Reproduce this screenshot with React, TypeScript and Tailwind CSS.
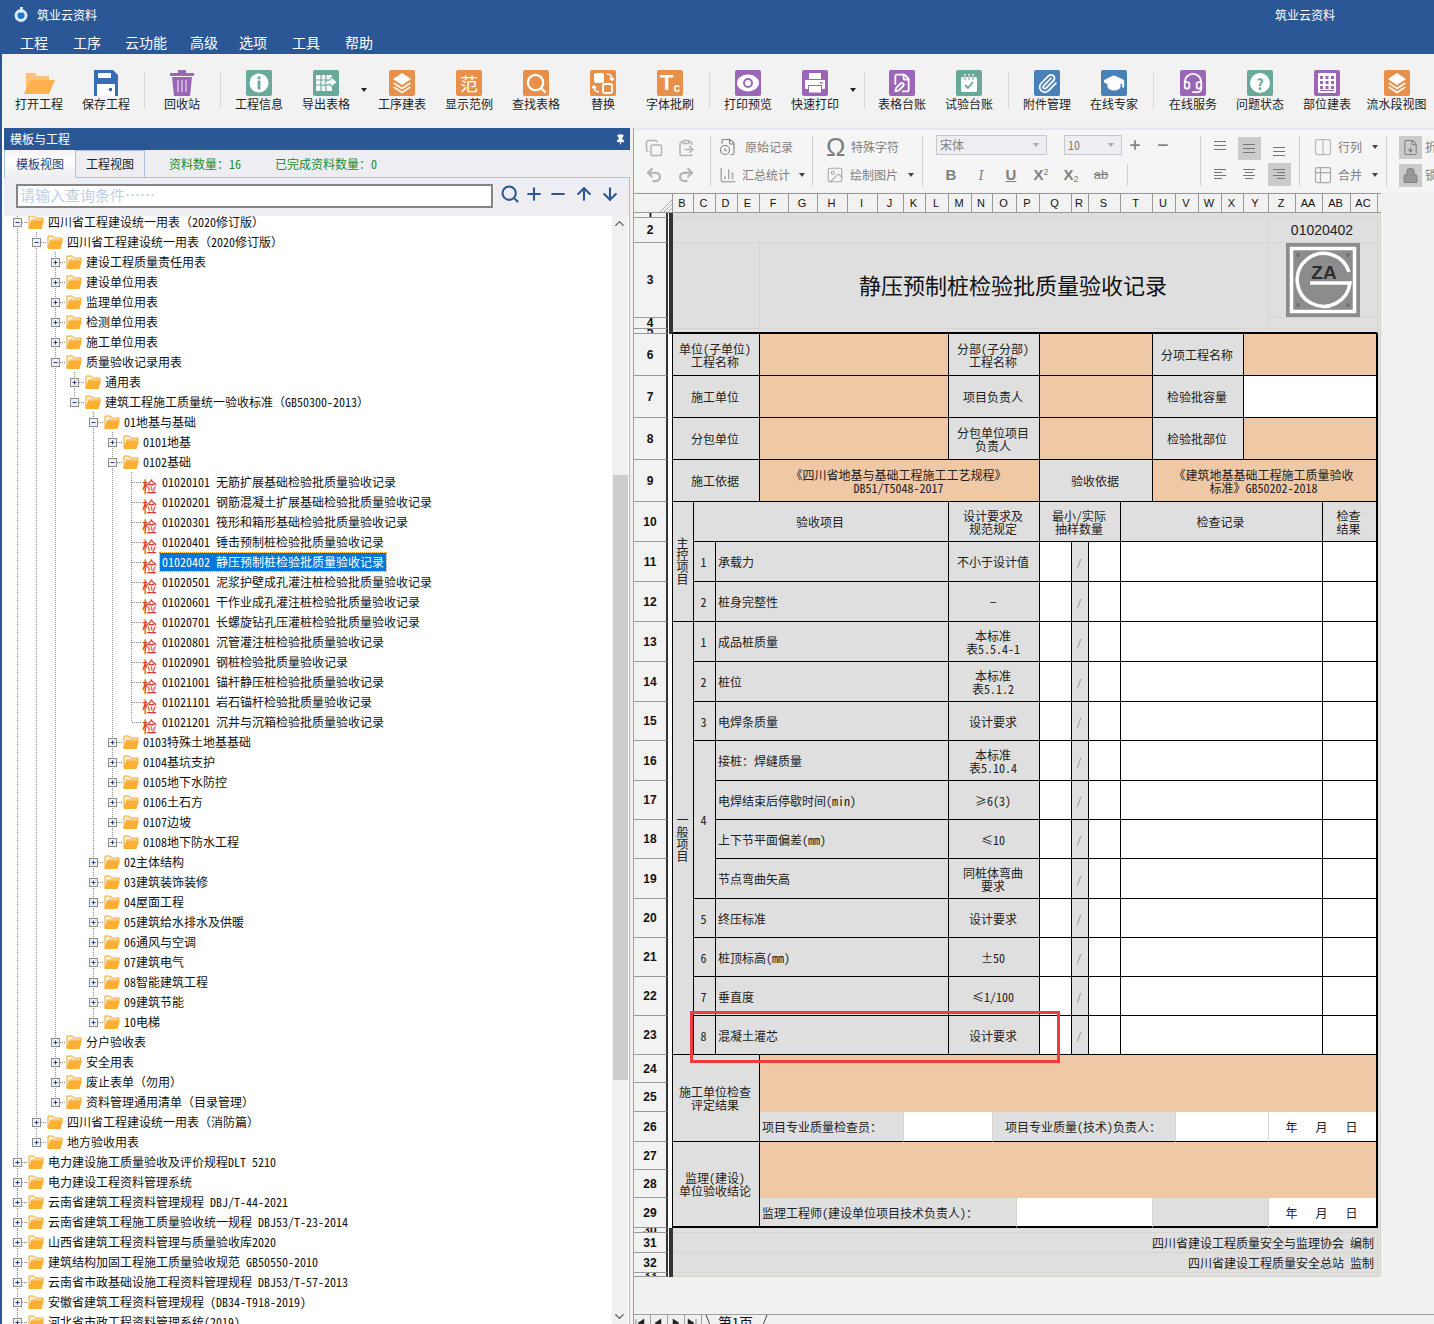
import type { ReactNode } from "react";
import {
  ArrowDown,
  ArrowUp,
  ChartColumn,
  ChevronDown,
  ChevronUp,
  ClipboardPaste,
  Columns2,
  Copy,
  FileClock,
  FileDown,
  FilePen,
  GraduationCap,
  Headset,
  Image,
  Lock,
  Minus,
  Paperclip,
  Pin,
  Plus,
  Redo2,
  Search,
  Table2,
  Undo2,
} from "lucide-react";

// ---------- Toolbar icons ----------
const Tile = ({ className, children }: { className: string; children: ReactNode }) => (
  <div className={`flex h-[26px] w-[26px] items-center justify-center rounded-[2px] text-white ${className}`}>
    {children}
  </div>
);

const LayersGlyph = () => (
  <svg width="20" height="22" viewBox="0 0 20 22" fill="#fff">
    <path d="M10 1 19 7 10 13 1 7z" />
    <path d="M2.5 10.5 10 15.5 17.5 10.5 19 11.5 10 17.5 1 11.5z" />
    <path d="M2.5 14.5 10 19.5 17.5 14.5 19 15.5 10 21.5 1 15.5z" />
  </svg>
);

const OpenFolder = () => (
  <svg width="32" height="24" viewBox="0 0 32 24">
    <path d="M3 2h9l2 3h12v4H7L3 20z" fill="#fcc27a" />
    <path d="M7 9h25l-6 14H1z" fill="#fdb14f" />
  </svg>
);

const SaveIcon = () => (
  <svg width="24" height="26" viewBox="0 0 24 26">
    <path d="M0 0h19l5 5v21H0z" fill="#3a6db4" />
    <rect x="4" y="3" width="13" height="5" fill="#fff" />
    <rect x="3" y="14" width="18" height="12" fill="#fff" />
    <rect x="15" y="18" width="3" height="3" fill="#3a6db4" />
  </svg>
);

const TrashIcon = () => (
  <svg width="24" height="26" viewBox="0 0 24 26">
    <path d="M8 3V0h8v3h8v3H0V3z" fill="#9a66b5" />
    <path d="M2 7h20l-2 19H4z" fill="#9a66b5" />
    <path d="M8 10v12M12 10v12M16 10v12" stroke="#d8c4e4" strokeWidth="1.5" />
  </svg>
);

const InfoGlyph = () => (
  <svg width="20" height="20" viewBox="0 0 20 20">
    <circle cx="10" cy="10" r="9.5" fill="#fff" />
    <rect x="8.6" y="3.5" width="2.8" height="2.8" fill="#6aa99a" />
    <rect x="8.6" y="7.5" width="2.8" height="9" fill="#6aa99a" />
  </svg>
);

const ExportGlyph = () => (
  <svg width="22" height="20" viewBox="0 0 22 20">
    <rect x="1" y="2" width="16" height="16" fill="#fff" />
    <path d="M1 7h16M1 12h16M6 2v16M11 2v16" stroke="#6aa99a" strokeWidth="1.2" />
    <path d="M9 13c1-5 4-6 7-6V4l6 5-6 5v-3c-3 0-5 0-7 2z" fill="#fff" stroke="#6aa99a" strokeWidth=".8" />
  </svg>
);

const ReplaceGlyph = () => (
  <svg width="22" height="22" viewBox="0 0 22 22" fill="none">
    <rect x="2" y="1" width="10" height="10" rx="2" fill="#fff" />
    <rect x="11" y="12" width="9" height="9" rx="1.5" stroke="#fff" strokeWidth="1.8" />
    <path d="M15 2c3 0 5 2 5 6M18 6l2 2 2-2M7 20c-3 0-5-2-5-6M0 16l2-2 2 2" stroke="#fff" strokeWidth="1.6" />
  </svg>
);

const EyeGlyph = () => (
  <svg width="22" height="18" viewBox="0 0 22 18">
    <ellipse cx="11" cy="9" rx="11" ry="8.5" fill="#fff" />
    <circle cx="11" cy="9" r="5" fill="#9a66b5" />
    <circle cx="11" cy="9" r="3" fill="#fff" />
  </svg>
);

const PrinterGlyph = () => (
  <svg width="22" height="22" viewBox="0 0 22 22">
    <rect x="5" y="1" width="12" height="6" fill="#fff" />
    <rect x="1" y="8" width="20" height="9" rx="1" fill="#fff" />
    <rect x="4.5" y="13.5" width="13" height="7.5" fill="#fff" stroke="#9a66b5" />
    <rect x="16" y="10" width="2.5" height="1.5" fill="#9a66b5" />
  </svg>
);

const LedgerGlyph = () => (
  <svg width="22" height="22" viewBox="0 0 22 22">
    <rect x="3" y="5" width="16" height="15" rx="1.5" fill="#fff" />
    <path d="M7 2v6M11 2v6M15 2v6" stroke="#fff" strokeWidth="1.6" />
    <path d="M7 3v5M11 3v5M15 3v5" stroke="#3f7f70" strokeWidth=".8" />
    <path d="M7 13l3 3 5-6" fill="none" stroke="#6aa99a" strokeWidth="1.8" />
  </svg>
);

const HelpGlyph = () => (
  <div className="flex h-5 w-5 items-center justify-center rounded-full bg-white text-[15px] font-bold leading-none text-[#6aa99a]">
    ?
  </div>
);

const GridGlyph = () => (
  <svg width="18" height="20" viewBox="0 0 18 20">
    <rect width="18" height="20" rx="1" fill="#fff" />
    {[3, 8, 13].map((y) =>
      [2, 7.5, 13].map((x) => <rect key={`${x}-${y}`} x={x} y={y} width="3" height="3" fill="#9a66b5" />)
    )}
    <rect x="2" y="17" width="14" height="1" fill="#9a66b5" />
  </svg>
);

const Caret = ({ className = "" }: { className?: string }) => (
  <svg width="6" height="4" viewBox="0 0 6 4" className={className}>
    <path d="M0 0h6L3 4z" fill="currentColor" />
  </svg>
);

// ---------- Toolbar data ----------
type ToolItem =
  | { kind: "tool"; label: string; icon: ReactNode; wide?: boolean }
  | { kind: "sep"; w: string }
  | { kind: "drop"; w: string; line?: boolean };

const PURPLE = "bg-[#9a66b5]";
const GREEN = "bg-[#6aa99a]";
const ORANGE = "bg-[#e8904a]";
const BLUE = "bg-[#4a80b8]";

const tools: ToolItem[] = [
  { kind: "tool", label: "打开工程", icon: <OpenFolder /> },
  { kind: "tool", label: "保存工程", icon: <SaveIcon /> },
  { kind: "sep", w: "w-[9px]" },
  { kind: "tool", label: "回收站", icon: <TrashIcon /> },
  { kind: "sep", w: "w-[10px]" },
  { kind: "tool", label: "工程信息", icon: <Tile className={GREEN}><InfoGlyph /></Tile> },
  { kind: "tool", label: "导出表格", icon: <Tile className={GREEN}><ExportGlyph /></Tile> },
  { kind: "drop", w: "w-[9px]" },
  { kind: "tool", label: "工序建表", icon: <Tile className={ORANGE}><LayersGlyph /></Tile> },
  { kind: "tool", label: "显示范例", icon: <Tile className={`${ORANGE} text-[18px] leading-none`}>范</Tile> },
  { kind: "tool", label: "查找表格", icon: <Tile className={ORANGE}><Search size={23} strokeWidth={2.4} /></Tile> },
  { kind: "tool", label: "替换", icon: <Tile className={ORANGE}><ReplaceGlyph /></Tile> },
  {
    kind: "tool",
    label: "字体批刷",
    icon: (
      <Tile className={`${ORANGE} items-end font-['Liberation_Sans',sans-serif] font-bold leading-none`}>
        <span className="mb-[2px] text-[22px] leading-[22px]">T</span>
        <span className="mb-[2px] text-[12px] leading-[12px]">c</span>
      </Tile>
    ),
  },
  { kind: "sep", w: "w-[11px]" },
  { kind: "tool", label: "打印预览", icon: <Tile className={PURPLE}><EyeGlyph /></Tile> },
  { kind: "tool", label: "快速打印", icon: <Tile className={PURPLE}><PrinterGlyph /></Tile> },
  { kind: "drop", w: "w-[20px]", line: true },
  { kind: "tool", label: "表格台账", icon: <Tile className={PURPLE}><FilePen size={20} strokeWidth={2.2} /></Tile> },
  { kind: "tool", label: "试验台账", icon: <Tile className={GREEN}><LedgerGlyph /></Tile> },
  { kind: "sep", w: "w-[11px]" },
  { kind: "tool", label: "附件管理", icon: <Tile className={BLUE}><Paperclip size={21} strokeWidth={2} /></Tile> },
  { kind: "tool", label: "在线专家", icon: <Tile className={BLUE}><GraduationCap size={22} strokeWidth={2.2} fill="#fff" stroke="#fff" /></Tile> },
  { kind: "sep", w: "w-[12px]" },
  { kind: "tool", label: "在线服务", icon: <Tile className={PURPLE}><Headset size={22} strokeWidth={2} /></Tile> },
  { kind: "tool", label: "问题状态", icon: <Tile className={GREEN}><HelpGlyph /></Tile> },
  { kind: "tool", label: "部位建表", icon: <Tile className={PURPLE}><GridGlyph /></Tile> },
  { kind: "tool", label: "流水段视图", icon: <Tile className={ORANGE}><LayersGlyph /></Tile>, wide: true },
];

const MainToolbar = () => (
  <div className="flex h-[71px] bg-[#f2f2f2] pl-[3.5px] pt-4">
    {tools.map((item, i) => {
      if (item.kind === "sep") {
        return (
          <div key={i} className={`flex shrink-0 justify-center pt-[2px] ${item.w}`}>
            <div className="h-[36px] w-px bg-[#d6d6d6]" />
          </div>
        );
      }
      if (item.kind === "drop") {
        return (
          <div key={i} className={`flex shrink-0 pl-px pt-[18px] text-[#222] ${item.w}`}>
            <Caret />
            {item.line && <div className="-mt-[16px] ml-[8px] h-[36px] w-px bg-[#d6d6d6]" />}
          </div>
        );
      }
      return (
        <div key={i} className={`flex shrink-0 flex-col items-center ${item.wide ? "w-[72px]" : "w-[67px]"}`}>
          <div className="flex h-[26px] items-center">{item.icon}</div>
          <span className="whitespace-nowrap text-[12px] leading-4 text-[#222]">{item.label}</span>
        </div>
      );
    })}
  </div>
);

// ---------- Tree ----------
type TreeNode = { t: string; kids?: TreeNode[]; leaf?: boolean; sel?: boolean };

const n = (t: string, kids?: TreeNode[]): TreeNode => ({ t, kids });
const l = (t: string, sel = false): TreeNode => ({ t, leaf: true, sel });

const tree: TreeNode[] = [
  n("四川省工程建设统一用表（2020修订版）", [
    n("四川省工程建设统一用表（2020修订版）", [
      n("建设工程质量责任用表"),
      n("建设单位用表"),
      n("监理单位用表"),
      n("检测单位用表"),
      n("施工单位用表"),
      n("质量验收记录用表", [
        n("通用表"),
        n("建筑工程施工质量统一验收标准（GB50300-2013）", [
          n("01地基与基础", [
            n("0101地基"),
            n("0102基础", [
              l("01020101 无筋扩展基础检验批质量验收记录"),
              l("01020201 钢筋混凝土扩展基础检验批质量验收记录"),
              l("01020301 筏形和箱形基础检验批质量验收记录"),
              l("01020401 锤击预制桩检验批质量验收记录"),
              l("01020402 静压预制桩检验批质量验收记录", true),
              l("01020501 泥浆护壁成孔灌注桩检验批质量验收记录"),
              l("01020601 干作业成孔灌注桩检验批质量验收记录"),
              l("01020701 长螺旋钻孔压灌桩检验批质量验收记录"),
              l("01020801 沉管灌注桩检验批质量验收记录"),
              l("01020901 钢桩检验批质量验收记录"),
              l("01021001 锚杆静压桩检验批质量验收记录"),
              l("01021101 岩石锚杆检验批质量验收记录"),
              l("01021201 沉井与沉箱检验批质量验收记录"),
            ]),
            n("0103特殊土地基基础"),
            n("0104基坑支护"),
            n("0105地下水防控"),
            n("0106土石方"),
            n("0107边坡"),
            n("0108地下防水工程"),
          ]),
          n("02主体结构"),
          n("03建筑装饰装修"),
          n("04屋面工程"),
          n("05建筑给水排水及供暖"),
          n("06通风与空调"),
          n("07建筑电气"),
          n("08智能建筑工程"),
          n("09建筑节能"),
          n("10电梯"),
        ]),
      ]),
      n("分户验收表"),
      n("安全用表"),
      n("废止表单（勿用）"),
      n("资料管理通用清单（目录管理）"),
    ]),
    n("四川省工程建设统一用表（消防篇）"),
    n("地方验收用表"),
  ]),
  n("电力建设施工质量验收及评价规程DLT 5210"),
  n("电力建设工程资料管理系统"),
  n("云南省建筑工程资料管理规程 DBJ/T-44-2021"),
  n("云南省建筑工程施工质量验收统一规程 DBJ53/T-23-2014"),
  n("山西省建筑工程资料管理与质量验收库2020"),
  n("建筑结构加固工程施工质量验收规范 GB50550-2010"),
  n("云南省市政基础设施工程资料管理规程 DBJ53/T-57-2013"),
  n("安徽省建筑工程资料管理规程 (DB34-T918-2019)"),
  n("河北省市政工程资料管理系统(2019)"),
];

type FlatRow = { node: TreeNode; guides: boolean[]; last: boolean };

const flatten = (nodes: TreeNode[], guides: boolean[], out: FlatRow[]) => {
  nodes.forEach((node, i) => {
    const last = i === nodes.length - 1;
    out.push({ node, guides, last });
    if (node.kids) flatten(node.kids, [...guides, !last], out);
  });
  return out;
};

const flatRows = flatten(tree, [], []);

const DOTS = { stroke: "#8f8f8f", strokeWidth: 1, strokeDasharray: "1 1" };

const Connector = ({ node, last }: { node: TreeNode; last: boolean }) => (
  <svg width="20" height="20" viewBox="0 0 20 20" className="shrink-0">
    <path d={`M9.5 0V${last ? 10 : 20}M10 10.5H20`} fill="none" {...DOTS} />
    {!node.leaf && (
      <>
        <rect x="5.5" y="6.5" width="8" height="8" fill="#eef0f2" stroke="#8d8d8d" />
        <path d="M7.5 10.5h4" stroke="#22438f" />
        {!node.kids && <path d="M9.5 8.5v4" stroke="#22438f" />}
      </>
    )}
  </svg>
);

const FolderIcon = () => (
  <svg width="16" height="14" viewBox="0 0 16 14" className="shrink-0">
    <path d="M1 2V1h5l1.5 2H15v2H4L1 13z" fill="#fff3dc" stroke="#f6a623" strokeWidth="1" />
    <path d="M3.5 5.5H16L13.5 14H0.5z" fill="#fbb034" />
  </svg>
);

const TreeRow = ({ row }: { row: FlatRow }) => (
  <div className="flex h-5 items-center whitespace-pre text-[12px] leading-5 text-[#111]">
    {row.guides.map((on, i) => (
      <svg key={i} width="19" height="20" viewBox="0 0 19 20" className="shrink-0">
        {on && <path d="M9.5 0V20" fill="none" {...DOTS} />}
      </svg>
    ))}
    <Connector node={row.node} last={row.last} />
    {row.node.leaf ? (
      <span className="mt-[6px] w-5 shrink-0 text-[15px] leading-[13px] text-[#e0352b] [text-shadow:0_1px_0_#f6c0c0]">检</span>
    ) : (
      <div className="mr-1">
        <FolderIcon />
      </div>
    )}
    {row.node.sel ? (
      <span className="-ml-[2px] bg-[#0078d7] px-[2px] leading-[18px] text-white outline-1 outline-dotted outline-[#f0900c]">{row.node.t}</span>
    ) : (
      <span>{row.node.t}</span>
    )}
  </div>
);

const LeftPanel = () => (
  <div className="flex h-full w-[628px] shrink-0 flex-col bg-white pl-[2px]">
    <div className="flex h-[22px] items-center justify-between bg-[#2b5797] pl-[6px] pr-[4px] text-[12px] text-white">
      <span>模板与工程</span>
      <Pin size={11} fill="#fff" strokeWidth={2} />
    </div>
    <div className="flex h-7 items-end bg-[#eeeef2]">
      <div className="flex h-7 w-[71px] items-center justify-center border-l border-[#a9c0e0] bg-[linear-gradient(#f2f2f6,#fff_35%,#eeeef2)] text-[12px] text-[#1f3f7f]">模板视图</div>
      <div className="flex h-7 w-[70px] items-center justify-center border border-[#a9c0e0] text-[12px] text-[#222]">工程视图</div>
      <div className="h-7 flex-1 border-b border-[#a9c0e0] pl-6 text-[12px] leading-7 text-[#1c8c2a]">
        <span className="mr-[34px]">资料数量：16</span>
        <span>已完成资料数量：0</span>
      </div>
    </div>
    <div className="flex h-[38px] items-start border-r border-[#a9c0e0] bg-[#eeeef2] pl-3 pt-[6px]">
      <div className="h-6 w-[477px] border-2 border-[#858585] bg-white pl-[2px] text-[15px] leading-[18px] text-[#bcd0e8]">请输入查询条件……</div>
      <div className="ml-[7px] flex items-center gap-1 text-[#2b5797]">
        <Search size={20} strokeWidth={2.5} />
        <Plus size={20} strokeWidth={2.5} />
        <Minus size={20} strokeWidth={2.5} />
        <ArrowUp size={20} strokeWidth={2.5} className="ml-[2px]" />
        <ArrowDown size={20} strokeWidth={2.5} className="ml-[2px]" />
      </div>
    </div>
    <div className="flex min-h-0 flex-1 border-r border-[#a9c0e0]">
      <div className="min-h-0 flex-1 overflow-hidden pl-1">
        <div className="-mt-1">
          {flatRows.map((row, i) => (
            <TreeRow key={i} row={row} />
          ))}
        </div>
      </div>
      <div className="mr-px flex w-4 shrink-0 flex-col bg-[#f0f0f0]">
        <ChevronUp size={15} strokeWidth={2} className="text-[#555]" />
        <div className="ml-px mt-[244px] h-[605px] w-[15px] bg-[#cdcdcd]" />
        <div className="flex-1" />
        <ChevronDown size={15} strokeWidth={2} className="text-[#555]" />
      </div>
    </div>
  </div>
);

// ---------- Format toolbar ----------
const Sep = () => <div className="h-[50px] w-px shrink-0 self-center bg-[#cfcfcf]" />;

const LINES: Record<string, number[][]> = {
  top: [[2, 14, 1], [2, 14, 5], [2, 14, 9]],
  mid: [[2, 14, 4], [2, 14, 8], [2, 14, 12]],
  bot: [[2, 14, 7], [2, 14, 11], [2, 14, 15]],
  left: [[2, 14, 3], [2, 10, 6], [2, 14, 9], [2, 10, 12]],
  center: [[2, 14, 3], [4, 12, 6], [2, 14, 9], [4, 12, 12]],
  right: [[2, 14, 3], [6, 14, 6], [2, 14, 9], [6, 14, 12]],
};

const AlignBtn = ({ kind, on }: { kind: string; on?: boolean }) => (
  <div className={`flex h-[23px] w-[23px] items-center justify-center ${on ? "bg-[#cbcbcb]" : ""}`}>
    <svg width="16" height="16" viewBox="0 0 16 16">
      {LINES[kind].map(([a, b, y], i) => (
        <path key={i} d={`M${a} ${y + 0.5}H${b}`} stroke="#777" />
      ))}
    </svg>
  </div>
);

const FormatToolbar = () => (
  <div className="flex h-[64px] shrink-0 border-t-2 border-[#e6e6ee] bg-[#f5f5f5] text-[12px] text-[#808080]">
    <div className="grid w-[76px] shrink-0 grid-cols-[32px_32px] place-items-center py-1 pl-1 text-[#b4b4b4]">
      <Copy size={18} />
      <ClipboardPaste size={18} />
      <Undo2 size={18} strokeWidth={3} />
      <Redo2 size={18} strokeWidth={3} />
    </div>
    <Sep />
    <div className="flex w-[101px] shrink-0 flex-col justify-center gap-[6px] pl-2">
      <div className="flex h-[22px] items-center gap-[8px]"><FileClock size={18} strokeWidth={1.5} />原始记录</div>
      <div className="flex h-[22px] items-center gap-[5px]"><ChartColumn size={18} strokeWidth={2} className="text-[#aaa]" />汇总统计<Caret className="ml-1 text-[#444]" /></div>
    </div>
    <Sep />
    <div className="flex w-[109px] shrink-0 flex-col justify-center gap-[6px] pl-[13px]">
      <div className="flex h-[22px] items-center gap-[3px]"><span className="w-[22px] font-['Liberation_Sans',sans-serif] text-[26px] leading-none">Ω</span>特殊字符</div>
      <div className="flex h-[22px] items-center gap-[6px]"><Image size={18} strokeWidth={1.5} className="text-[#aaa]" />绘制图片<Caret className="ml-1 text-[#444]" /></div>
    </div>
    <Sep />
    <div className="flex w-[277px] shrink-0 flex-col justify-center gap-[8px] pl-[13px]">
      <div className="flex h-5 items-center">
        <div className="flex h-5 w-[111px] items-center justify-between border border-[#c8c8d4] bg-[#eeeef2] px-[3px]">宋体<Caret className="mr-1 text-[#aaa]" /></div>
        <div className="ml-[17px] flex h-5 w-[58px] items-center justify-between border border-[#c8c8d4] bg-[#eeeef2] px-[3px]">10<Caret className="mr-1 text-[#aaa]" /></div>
        <Plus size={14} strokeWidth={3} className="ml-[6px]" />
        <Minus size={14} strokeWidth={3} className="ml-[14px]" />
      </div>
      <div className="flex h-[24px] items-center font-['Liberation_Sans',sans-serif] text-[15px] font-bold">
        <span className="w-[30px] text-center">B</span>
        <span className="w-[30px] text-center font-serif font-normal italic">I</span>
        <span className="w-[30px] text-center underline">U</span>
        <span className="w-[30px] text-center">X<sup className="text-[9px] font-normal">2</sup></span>
        <span className="w-[30px] text-center">X<sub className="text-[9px] font-normal">2</sub></span>
        <span className="w-[30px] text-center text-[13px] font-normal line-through">ab</span>
        <div className="ml-[11px] h-[22px] w-px bg-[#cfcfcf]" />
      </div>
    </div>
    <Sep />
    <div className="grid w-[98px] shrink-0 grid-cols-3 place-items-center py-[5px] pl-1 pr-[5px]">
      <AlignBtn kind="top" />
      <AlignBtn kind="mid" on />
      <AlignBtn kind="bot" />
      <AlignBtn kind="left" />
      <AlignBtn kind="center" />
      <AlignBtn kind="right" on />
    </div>
    <Sep />
    <div className="flex w-[86px] shrink-0 flex-col justify-center gap-[6px] pl-[13px]">
      <div className="flex h-[22px] items-center gap-[5px]"><Columns2 size={20} strokeWidth={1.5} className="text-[#bbb]" />行列<Caret className="ml-[5px] text-[#444]" /></div>
      <div className="flex h-[22px] items-center gap-[5px]"><Table2 size={20} strokeWidth={1.5} className="text-[#aaa]" />合并<Caret className="ml-[5px] text-[#444]" /></div>
    </div>
    <Sep />
    <div className="flex flex-col justify-center gap-[5px] whitespace-nowrap pl-[12px]">
      <div className="flex h-[23px] items-center gap-[3px]"><div className="flex h-[23px] w-[23px] items-center justify-center bg-[#cbcbcb]"><FileDown size={17} strokeWidth={1.5} /></div>折叠</div>
      <div className="flex h-[23px] items-center gap-[3px]"><div className="flex h-[23px] w-[23px] items-center justify-center bg-[#cbcbcb]"><Lock size={17} fill="#999" strokeWidth={1.5} /></div>锁定</div>
    </div>
  </div>
);

// ---------- Sheet ----------
const COLS: [string, number][] = [
  ["B", 21], ["C", 22], ["D", 22], ["E", 22], ["F", 29], ["G", 29], ["H", 30], ["I", 30], ["J", 26], ["K", 22],
  ["L", 23], ["M", 23], ["N", 21], ["O", 24], ["P", 23], ["Q", 32], ["R", 17], ["S", 32], ["T", 32], ["U", 23],
  ["V", 23], ["W", 23], ["X", 22], ["Y", 25], ["Z", 27], ["AA", 27], ["AB", 28], ["AC", 27],
];

type Cell = {
  t?: ReactNode;
  span: number;
  rows?: number;
  fill?: "g" | "o" | "w";
  left?: boolean;
  right?: boolean;
  soft?: boolean; // cream right border
  cream?: boolean; // cream on both sides
  noBottom?: boolean;
  edge?: boolean; // thick right edge of the form
  thick?: boolean; // thick bottom of the form
  vertical?: boolean;
};

const g = (t: ReactNode, span: number, extra: Partial<Cell> = {}): Cell => ({ t, span, fill: "g", ...extra });
const o = (span: number, extra: Partial<Cell> = {}): Cell => ({ span, fill: "o", ...extra });
const w = (span: number, extra: Partial<Cell> = {}): Cell => ({ span, fill: "w", ...extra });

const checkCells = (): Cell[] => [
  w(1),
  g(<span className="text-[10px] text-[#777]">/</span>, 1),
  w(1),
  w(8),
  w(2, { edge: true }),
];

const checkRow = (no: ReactNode, item: string, req: string, lead: Cell[] = []): Cell[] => [
  ...lead,
  ...(no === null ? [] : [g(no, 1)]),
  g(item, 9, { left: true }),
  g(req, 4),
  ...checkCells(),
];

const Logo = () => (
  <svg width="74" height="74" viewBox="0 0 74 74" className="ml-[17px]">
    <rect width="74" height="74" fill="#8c8c8c" />
    <rect x="5.5" y="5.5" width="63" height="63" fill="none" stroke="#fff" strokeWidth="3.5" />
    <path d="M63 29A26.5 26.5 0 1 0 64 40H24" fill="none" stroke="#fff" strokeWidth="3.5" />
    {[12, 62].map((y) => [12, 62].map((x) => <circle key={`${x}-${y}`} cx={x} cy={y} r="1.8" fill="#6c6c6c" />))}
    <text x="38" y="36" textAnchor="middle" fontFamily="Liberation Sans" fontWeight="bold" fontSize="19" fill="#2e2e2e">ZA</text>
  </svg>
);

const RAW_ROWS: { n: string; h: number; dark?: boolean; cells: Cell[] }[] = [
  { n: "1", h: 5, dark: true, cells: [{ span: 28, fill: "g", cream: true }] },
  {
    n: "2", h: 25, dark: true,
    cells: [
      { span: 24, fill: "g", cream: true },
      { t: <span className="font-['Liberation_Sans',sans-serif] text-[14px] leading-4 text-[#222]">01020402</span>, span: 4, fill: "g", cream: true },
    ],
  },
  {
    n: "3", h: 75, dark: true,
    cells: [
      { span: 4, rows: 2, fill: "g", cream: true },
      { t: <span className="block pb-1 text-[22px] leading-7 text-[#111]">静压预制桩检验批质量验收记录</span>, span: 20, rows: 2, fill: "g", cream: true },
      { t: <Logo />, span: 4, fill: "g", cream: true },
    ],
  },
  { n: "4", h: 11, dark: true, cells: [{ span: 4, fill: "g", cream: true }] },
  { n: "5", h: 5, dark: true, cells: [{ span: 28, fill: "g", cream: true, thick: true }] },
  { n: "6", h: 42, cells: [g("单位(子单位)\n工程名称", 4), o(7), g("分部(子分部)\n工程名称", 4), o(4), g("分项工程名称", 4), o(5, { edge: true })] },
  { n: "7", h: 42, cells: [g("施工单位", 4), o(7), g("项目负责人", 4), o(4), g("检验批容量", 4), w(5, { edge: true })] },
  { n: "8", h: 42, cells: [g("分包单位", 4), o(7), g("分包单位项目\n负责人", 4), o(4), g("检验批部位", 4), o(5, { edge: true })] },
  {
    n: "9", h: 42,
    cells: [
      g("施工依据", 4),
      { t: "《四川省地基与基础工程施工工艺规程》\nDB51/T5048-2017", span: 11, fill: "o" },
      g("验收依据", 4),
      { t: "《建筑地基基础工程施工质量验收\n标准》GB50202-2018", span: 9, fill: "o", edge: true },
    ],
  },
  {
    n: "10", h: 40,
    cells: [
      g("主控项目", 1, { rows: 3, vertical: true }),
      g("验收项目", 10),
      g("设计要求及\n规范规定", 4),
      g("最小/实际\n抽样数量", 3),
      g("检查记录", 8),
      g("检查\n结果", 2, { edge: true }),
    ],
  },
  { n: "11", h: 40, cells: checkRow("1", "承载力", "不小于设计值") },
  { n: "12", h: 40, cells: checkRow("2", "桩身完整性", "−") },
  { n: "13", h: 40, cells: checkRow("1", "成品桩质量", "本标准\n表5.5.4-1", [g("一般项目", 1, { rows: 11, vertical: true })]) },
  { n: "14", h: 40, cells: checkRow("2", "桩位", "本标准\n表5.1.2") },
  { n: "15", h: 39, cells: checkRow("3", "电焊条质量", "设计要求") },
  { n: "16", h: 40, cells: checkRow(null, "接桩：焊缝质量", "本标准\n表5.10.4", [g("4", 1, { rows: 4 })]) },
  { n: "17", h: 39, cells: checkRow(null, "电焊结束后停歇时间(min)", "≥6(3)") },
  { n: "18", h: 39, cells: checkRow(null, "上下节平面偏差(mm)", "≤10") },
  { n: "19", h: 40, cells: checkRow(null, "节点弯曲矢高", "同桩体弯曲\n要求") },
  { n: "20", h: 39, cells: checkRow("5", "终压标准", "设计要求") },
  { n: "21", h: 39, cells: checkRow("6", "桩顶标高(mm)", "±50") },
  { n: "22", h: 39, cells: checkRow("7", "垂直度", "≤1/100") },
  { n: "23", h: 39, cells: checkRow("8", "混凝土灌芯", "设计要求") },
  { n: "24", h: 28, cells: [g("施工单位检查\n评定结果", 4, { rows: 3 }), o(24, { rows: 2, edge: true, noBottom: true })] },
  { n: "25", h: 29, cells: [] },
  {
    n: "26", h: 30,
    cells: [
      g("项目专业质量检查员：", 5, { left: true, soft: true }),
      w(4, { soft: true }),
      g("项目专业质量(技术)负责人：", 7, { soft: true }),
      w(4, { soft: true }),
      { t: "年   月   日", span: 4, fill: "w", edge: true },
    ],
  },
  { n: "27", h: 28, cells: [g("监理(建设)\n单位验收结论", 4, { rows: 3, thick: true }), o(24, { rows: 2, edge: true, noBottom: true })] },
  { n: "28", h: 28, cells: [] },
  {
    n: "29", h: 30,
    cells: [
      g("监理工程师(建设单位项目技术负责人)：", 10, { left: true, soft: true, thick: true }),
      w(5, { soft: true, thick: true }),
      g("", 5, { soft: true, thick: true }),
      { t: "年   月   日", span: 4, fill: "w", edge: true, thick: true },
    ],
  },
  { n: "30", h: 5, dark: true, cells: [{ span: 28, fill: "g", cream: true }] },
  { n: "31", h: 20, dark: true, cells: [{ t: "四川省建设工程质量安全与监理协会 编制", span: 28, fill: "g", cream: true, right: true }] },
  { n: "32", h: 20, dark: true, cells: [{ t: "四川省建设工程质量安全总站 监制", span: 28, fill: "g", cream: true, right: true }] },
  { n: "33", h: 4, dark: true, cells: [{ span: 28, fill: "g", cream: true }] },
];

const FILL = { g: "bg-[#dfdfdf]", o: "bg-[#efc8a5]", w: "bg-white" };

const cellClass = (c: Cell) =>
  [
    FILL[c.fill ?? "g"],
    "p-0 align-middle whitespace-pre-wrap text-[12px] leading-[13px] text-[#222]",
    c.left ? "pl-[2px] text-left" : c.right ? "pr-[3px] text-right" : "pr-[2px] text-center",
    c.edge ? "border-r-2 border-r-black" : c.cream || c.soft ? "border-r border-r-[#d8d4cc]" : "border-r border-r-black",
    c.noBottom ? "" : c.thick ? "border-b-2 border-b-black" : c.cream ? "border-b border-b-[#d8d4cc]" : "border-b border-b-black",
  ].join(" ");

const SheetCell = ({ cell }: { cell: Cell }) => (
  <td colSpan={cell.span} rowSpan={cell.rows} className={cellClass(cell)}>
    {cell.vertical ? <span className="inline-block leading-3 [writing-mode:vertical-lr]">{cell.t}</span> : cell.t}
  </td>
);

const Sheet = () => (
  <div className="relative w-[747px]">
    <table className="w-[747px] table-fixed border-separate border-spacing-0">
      <colgroup>
        <col className="w-[34px]" />
        <col className="w-[5px]" />
        {COLS.map(([name, width]) => (
          <col key={name} style={{ width }} />
        ))}
        <col className="w-[3px]" />
      </colgroup>
      <tbody>
        <tr className="h-[20px] font-['Liberation_Sans',sans-serif] text-[11px] text-[#111]">
          <td colSpan={2} className="border-y border-r border-[#999] bg-[#f2f2f2] p-0">
            <svg width="12" height="12" viewBox="0 0 12 12" className="ml-auto mt-[6px]">
              <path d="M12 0 0 12M12 4 4 12M12 8 8 12" stroke="#a9a9a9" />
            </svg>
          </td>
          {COLS.map(([name]) => (
            <td key={name} className="border-y border-r border-[#999] bg-[#f2f2f2] p-0 pr-[2px] text-center">{name}</td>
          ))}
          <td className="border-y border-[#999] bg-[#f0f0f0] p-0" />
        </tr>
        {RAW_ROWS.map((row) => (
          <tr key={row.n} style={{ height: row.h }}>
            <td className="border-r-2 border-b border-r-[#333] border-b-[#999] bg-[#f2f2f2] p-0">
              <div
                className="flex items-center justify-center overflow-hidden font-['Liberation_Sans',sans-serif] text-[12px] font-bold leading-none text-[#111]"
                style={{ height: row.h - 1 }}
              >
                {row.n}
              </div>
            </td>
            <td className={row.dark ? "border-l border-white bg-[#333] p-0" : "border-r border-black bg-white p-0"} />
            {row.cells.map((cell, i) => (
              <SheetCell key={i} cell={cell} />
            ))}
            <td className="border-r border-[#d8d4cc] bg-[#dfdfdf] p-0" />
          </tr>
        ))}
      </tbody>
    </table>
    {/* red mark over row 23 */}
    <div className="pointer-events-none absolute left-[56px] top-[818px] h-[52px] w-[370px] border-[3px] border-[#f03c3c]" />
  </div>
);

const NavGlyphs = [
  "M2 4v6M10 4 4 8l6 4z",
  "M10 4 4 8l6 4z",
  "M5 4l6 4-6 4z",
  "M11 4v6M3 4l6 4-6 4z",
];

const SheetTabs = () => (
  <div className="flex h-[10px] shrink-0 border-t border-[#a0a0a0]">
    {NavGlyphs.map((d, i) => (
      <div key={i} className="h-[10px] w-[17px] border-r border-[#a0a0a0]">
        <svg width="14" height="10" viewBox="0 0 14 10">
          <path d={d} fill="#222" stroke="#222" strokeWidth=".5" />
        </svg>
      </div>
    ))}
    <svg width="14" height="10" viewBox="0 0 14 10" className="ml-[2px] shrink-0">
      <path d="M2 0l4 10" stroke="#444" fill="none" />
    </svg>
    <span className="text-[14px] leading-[14px] text-[#111]">第1页</span>
    <svg width="14" height="10" viewBox="0 0 14 10" className="ml-[8px] shrink-0">
      <path d="M6 0 2 10" stroke="#444" fill="none" />
    </svg>
  </div>
);

const RightPanel = () => (
  <div className="flex h-full min-w-0 flex-1 flex-col pl-[3px]">
    <div className="flex h-full flex-col border-l border-[#8aa4c8]">
      <FormatToolbar />
      <div className="h-px shrink-0" />
      <Sheet />
      <div className="flex-1" />
      <SheetTabs />
    </div>
  </div>
);

const MENUS = [
  { t: "工程", c: "" },
  { t: "工序", c: "ml-[25px]" },
  { t: "云功能", c: "ml-[24px]" },
  { t: "高级", c: "ml-[23px]" },
  { t: "选项", c: "ml-[21px]" },
  { t: "工具", c: "ml-[25px]" },
  { t: "帮助", c: "ml-[25px]" },
];

export default function App() {
  return (
    <div className="h-[1324px] w-[1434px] overflow-hidden border-l-2 border-[#2b5797] bg-[#f0f0f0] font-['Noto_Sans_Mono_CJK_SC','Noto_Sans_CJK_SC',sans-serif]">
      <div className="-ml-[2px] h-[54px] bg-[#2b5797] text-white">
        <div className="flex h-[30px] items-center justify-between pl-[14px] pr-[99px] text-[12px]">
          <div className="flex items-center gap-[9px]">
            <svg width="14" height="16" viewBox="0 0 14 16">
              <circle cx="7" cy="8.5" r="6.5" fill="#d8ecfa" />
              <circle cx="7" cy="8.5" r="3.5" fill="#1a78c8" />
              <path d="M6 0h3l-1 6H6z" fill="#d8ecfa" />
            </svg>
            <span>筑业云资料</span>
          </div>
          <span>筑业云资料</span>
        </div>
        <div className="flex h-6 items-center pl-5 text-[14px] leading-6">
          {MENUS.map((m) => (
            <span key={m.t} className={m.c}>{m.t}</span>
          ))}
        </div>
      </div>
      <MainToolbar />
      <div className="flex h-[1199px] pt-[3px]">
        <LeftPanel />
        <RightPanel />
      </div>
    </div>
  );
}
